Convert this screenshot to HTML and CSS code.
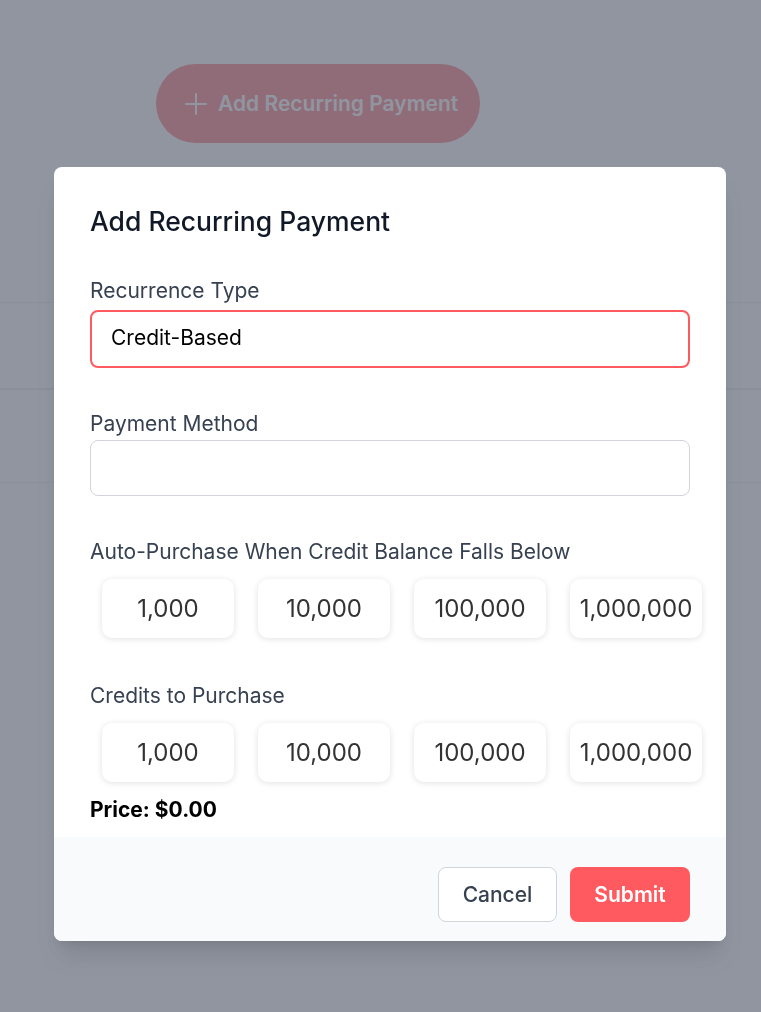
FILE: index.html
```html
<!DOCTYPE html>
<html lang="en">
<head>
    <meta charset="UTF-8">
    <meta name="viewport" content="width=device-width, initial-scale=1.0">
    <title>Recurring Payments</title>
    <link rel="stylesheet" href="styles.css">
</head>
<body>
    <div class="page">
        <div class="page-header">
            <button type="button" class="add-btn">
                <svg class="plus" width="22" height="22" viewBox="0 0 22 22" fill="none" stroke="currentColor" stroke-width="2" stroke-linecap="round">
                    <path d="M11 1v20M1 11h20"/>
                </svg>
                Add Recurring Payment
            </button>
        </div>
        <div class="list">
            <div class="list-row list-head"></div>
            <div class="list-row"></div>
        </div>
    </div>

    <div class="overlay">
        <div class="modal">
            <div class="modal-body">
                <h2 class="modal-title">Add Recurring Payment</h2>

                <div class="field first">
                    <label class="field-label close" for="recurrenceType">Recurrence Type</label>
                    <div class="select active" id="recurrenceType">Credit-Based</div>
                </div>

                <div class="field">
                    <label class="field-label tight" for="paymentMethod">Payment Method</label>
                    <div class="select" id="paymentMethod"></div>
                </div>

                <div class="field">
                    <label class="field-label spaced">Auto-Purchase When Credit Balance Falls Below</label>
                    <div class="amounts">
                        <button type="button" class="amount">1,000</button>
                        <button type="button" class="amount">10,000</button>
                        <button type="button" class="amount">100,000</button>
                        <button type="button" class="amount">1,000,000</button>
                    </div>
                </div>

                <div class="field lower">
                    <label class="field-label spaced">Credits to Purchase</label>
                    <div class="amounts">
                        <button type="button" class="amount">1,000</button>
                        <button type="button" class="amount">10,000</button>
                        <button type="button" class="amount">100,000</button>
                        <button type="button" class="amount">1,000,000</button>
                    </div>
                </div>

                <p class="price">Price: $0.00</p>
            </div>
            <div class="modal-footer">
                <button type="button" class="btn btn-cancel">Cancel</button>
                <button type="button" class="btn btn-submit">Submit</button>
            </div>
        </div>
    </div>
</body>
</html>
```

FILE: styles.css
```css
body {
    margin: 0;
    font-family: 'Inter', 'Noto Sans', sans-serif;
    background-color: #ffffff;
    color: #111827;
}
.page {
    height: 1012px;
}
.page-header {
    padding: 64px 0 0 156px;
    height: 302px;
    box-sizing: border-box;
}
.add-btn {
    display: flex;
    align-items: center;
    gap: 11px;
    height: 79px;
    padding: 0 22px 0 29px;
    border: none;
    border-radius: 40px;
    background-color: #ff5a5f;
    color: #ffffff;
    font-family: inherit;
    font-size: 21px;
    font-weight: 600;
}
.list-row {
    height: 85px;
    border-top: 1px solid #e5e7eb;
}
.list-row + .list-row {
    height: 92px;
    border-top: 2px solid #e5e7eb;
    border-bottom: 1px solid #e5e7eb;
}

.overlay {
    position: fixed;
    inset: 0;
    background-color: rgba(107, 114, 128, 0.75);
    padding: 167px 0 0 54px;
}
.modal {
    width: 672px;
    background: white;
    border-radius: 8px;
    overflow: hidden;
    box-shadow: 0 20px 25px -5px rgba(0,0,0,0.1), 0 8px 10px -6px rgba(0,0,0,0.1);
}
.modal-body {
    padding: 38px 36px 13px 36px;
}
.modal-title {
    margin: 0;
    font-size: 26.5px;
    line-height: 32px;
    font-weight: 500;
    color: #111827;
}
.field.first {
    margin-top: 40px;
}
.field + .field {
    margin-top: 42px;
}
.field + .field.lower {
    margin-top: 44px;
}
.field-label {
    display: block;
    font-size: 21px;
    line-height: 28px;
    color: #374151;
    margin-bottom: 8px;
}
.field-label.close {
    margin-bottom: 5px;
}
.field-label.tight {
    margin-bottom: 2px;
}
.field-label.spaced {
    margin-bottom: 13px;
}
.select {
    height: 54px;
    border: 1px solid #d1d5db;
    border-radius: 8px;
    padding: 0 19px;
    font-size: 21px;
    line-height: 54px;
    color: #000000;
}
.select.active {
    border: 2px solid #ff5a5f;
    line-height: 52px;
}
.amounts {
    display: flex;
    gap: 24px;
    padding-left: 12px;
}
.amount {
    flex: 0 0 132px;
    height: 59px;
    padding: 0;
    border: none;
    border-radius: 10px;
    background: #ffffff;
    box-shadow: 0 1px 6px rgba(0,0,0,0.12);
    font-family: inherit;
    font-size: 24px;
    color: #333333;
}
.price {
    margin: 14px 0 0 0;
    font-size: 21px;
    line-height: 28px;
    font-weight: 700;
    color: #000000;
}
.modal-footer {
    display: flex;
    justify-content: flex-end;
    gap: 13px;
    background-color: #f9fafb;
    padding: 30px 36px 19px 36px;
}
.btn {
    height: 55px;
    border-radius: 8px;
    font-family: inherit;
    font-size: 21px;
    cursor: pointer;
}
.btn-cancel {
    width: 119px;
    background: #ffffff;
    border: 1px solid #d1d5db;
    color: #374151;
    font-weight: 500;
}
.btn-submit {
    width: 120px;
    background: #ff5a5f;
    border: none;
    color: #ffffff;
    font-weight: 600;
}
```
